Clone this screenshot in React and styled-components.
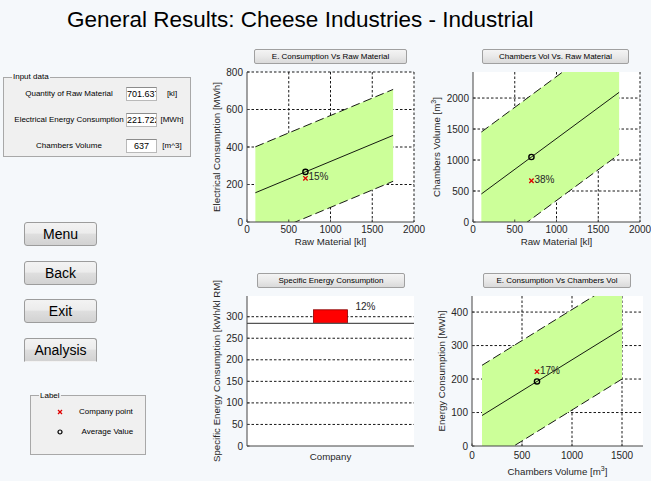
import React from "react";
import styled, { createGlobalStyle } from "styled-components";

const GlobalStyle = createGlobalStyle`
  html, body {
    margin: 0;
    padding: 0;
    background: #f5f8fb;
  }
  body {
    font-family: "Liberation Sans", Arial, sans-serif;
  }
`;

const Figure = styled.div`
  width: 651px;
  height: 481px;
  overflow: hidden;
  background: #f5f8fb;
  display: flex;
  flex-direction: column;
`;

const Title = styled.h1`
  margin: 0;
  height: 40px;
  box-sizing: border-box;
  padding: 7px 0 0 67px;
  font: normal 22.5px/26px "Liberation Sans", Arial, sans-serif;
  color: #000;
`;

const Main = styled.div`
  display: grid;
  grid-template-columns: 200px 226px 225px;
  grid-template-rows: 224px 217px;
`;

const Side = styled.div`
  grid-row: 1 / 3;
  display: flex;
  flex-direction: column;
  align-items: flex-start;
  padding-top: 32px;
`;

const Panel = styled.fieldset`
  margin: ${(p) => p.$top || 0}px 0 0 ${(p) => p.$left}px;
  width: ${(p) => p.$width}px;
  box-sizing: border-box;
  min-width: 0;
  border: 1px solid #a8a8a8;
  background: #f0f0f0;
  padding: ${(p) => p.$pad};
`;

const PanelTitle = styled.legend`
  font-size: 8px;
  line-height: 10px;
  padding: 0 1px;
  margin-left: -2px;
  color: #000;
`;

const InputGrid = styled.div`
  display: grid;
  grid-template-columns: 112px 31px 30px;
  grid-auto-rows: 14px;
  row-gap: 12px;
`;

const FieldName = styled.span`
  font-size: 8px;
  line-height: 14px;
  text-align: center;
  padding-right: 2px;
  white-space: nowrap;
  color: #000;
`;

const EditBox = styled.div`
  box-sizing: border-box;
  background: #fff;
  border: 1px solid #b9b9b9;
  border-top-color: #8c8c8c;
  font-size: 9px;
  line-height: 12px;
  text-align: center;
  white-space: nowrap;
  overflow: hidden;
  padding: 0;
  color: #000;
`;

const Unit = styled.span`
  font-size: 8px;
  line-height: 14px;
  text-align: center;
  color: #000;
`;

const SideButtons = styled.div`
  display: flex;
  flex-direction: column;
  gap: 14.5px;
  margin: 65px 0 0 24px;
`;

const PushButton = styled.button`
  width: 73px;
  height: 24px;
  box-sizing: border-box;
  padding: 0;
  border: 1px solid #9c9c9c;
  border-radius: 3px;
  ${(p) =>
    p.$cut &&
    `border-bottom-color: transparent;
     border-bottom-left-radius: 0;
     border-bottom-right-radius: 0;`}
  background: linear-gradient(#f3f3f3, #ececec 45%, #dedede 52%, #d2d2d2);
  font: 14px "Liberation Sans", Arial, sans-serif;
  color: #000;
`;

const KeyGrid = styled.div`
  display: grid;
  grid-template-columns: 38px auto;
  grid-auto-rows: 10px;
  row-gap: 10.5px;
  align-items: center;
`;

const KeyMark = styled.svg`
  justify-self: center;
  display: block;
`;

const KeyText = styled.span`
  font-size: 8px;
  line-height: 10px;
  padding-left: ${(p) => p.$shift || 0}px;
  color: #000;
`;

const ChartCell = styled.div`
  display: flex;
  flex-direction: column;
  align-items: flex-start;
  padding-top: 9px;
`;

const ChartTitle = styled.button`
  height: 15px;
  width: ${(p) => p.$w}px;
  margin-left: ${(p) => p.$x}px;
  box-sizing: border-box;
  padding: 0;
  border: 1px solid #a0a0a0;
  border-radius: 2px;
  background: linear-gradient(#f4f4f4, #e9e9e9 50%, #dadada);
  font: 8px/13px "Liberation Sans", Arial, sans-serif;
  color: #000;
`;

const ChartSvg = styled.svg`
  display: block;
  overflow: visible;
`;

const Tick = styled.text`
  font-family: "Liberation Sans", Arial, sans-serif;
  font-size: 10px;
  fill: #262626;
  dominant-baseline: central;
`;

const AxisLabel = styled.text`
  font-family: "Liberation Sans", Arial, sans-serif;
  font-size: 9.7px;
  fill: #262626;
  dominant-baseline: central;
  text-anchor: middle;
`;

const Y0 = 8;
const H = 150;

function Cross({ x, y, s = 2.2 }) {
  return (
    <g stroke="#e00000" strokeWidth="1.3">
      <line x1={x - s} y1={y - s} x2={x + s} y2={y + s} />
      <line x1={x - s} y1={y + s} x2={x + s} y2={y - s} />
    </g>
  );
}

function Ring({ x, y }) {
  return <circle cx={x} cy={y} r="2.6" fill="none" stroke="#000" strokeWidth="1.4" />;
}

function Axes({ x0, w, yTicks, py, xTicks, px }) {
  return (
    <g>
      <line x1={x0} y1={Y0} x2={x0} y2={Y0 + H} stroke="#444" />
      <line x1={x0} y1={Y0 + H} x2={x0 + w} y2={Y0 + H} stroke="#444" />
      {yTicks.map((t) => (
        <line key={"yt" + t} x1={x0} x2={x0 + 2.5} y1={py(t)} y2={py(t)} stroke="#444" />
      ))}
      {xTicks &&
        xTicks.map((t) => (
          <line key={"xt" + t} x1={px(t)} x2={px(t)} y1={Y0 + H} y2={Y0 + H - 2.5} stroke="#444" />
        ))}
      {yTicks.map((t) => (
        <Tick key={"yl" + t} x={x0 - 4} y={py(t)} textAnchor="end">
          {t}
        </Tick>
      ))}
    </g>
  );
}

// dashed grid, drawn under the band
function Grid({ children }) {
  return (
    <g stroke="#000" strokeWidth="1" strokeDasharray="2.5 2" opacity="0.9">
      {children}
    </g>
  );
}

function BandChart({ id, width, height, x0, w, xMax, yMax, xTicks, yTicks, band, at, company, pct, xLabel, yLabel, yLabelX, xLabelY = 177.7, tickY = 165.5 }) {
  const px = (v) => x0 + (v / xMax) * w;
  const py = (v) => Y0 + H - (v / yMax) * H;
  const mid = (x) => band.m * x + band.b;
  const up = (x) => mid(x) + band.d;
  const lo = (x) => mid(x) - band.d;
  const { x1, x2 } = band;
  const poly = [
    [px(x1), py(up(x1))],
    [px(x2), py(up(x2))],
    [px(x2), py(lo(x2))],
    [px(x1), py(lo(x1))],
  ]
    .map((p) => p.join(","))
    .join(" ");
  const cx = px(at);
  const cy = py(company);

  return (
    <ChartSvg width={width} height={height}>
      <defs>
        <clipPath id={id}>
          <rect x={x0} y={Y0} width={w} height={H} />
        </clipPath>
      </defs>
      <rect x={x0} y={Y0} width={w} height={H} fill="#fff" />
      <Grid>
        {xTicks.filter((t) => t > 0).map((t) => (
          <line key={"gx" + t} x1={px(t)} x2={px(t)} y1={Y0} y2={Y0 + H} />
        ))}
        {yTicks.filter((t) => t > 0).map((t) => (
          <line key={"gy" + t} x1={x0} x2={x0 + w} y1={py(t)} y2={py(t)} />
        ))}
      </Grid>
      <g clipPath={`url(#${id})`}>
        <polygon points={poly} fill="#ccff99" />
        <g stroke="#000" strokeWidth="0.9" fill="none">
          <line x1={px(x1)} y1={py(up(x1))} x2={px(x2)} y2={py(up(x2))} strokeDasharray="9 4" />
          <line x1={px(x1)} y1={py(lo(x1))} x2={px(x2)} y2={py(lo(x2))} strokeDasharray="9 4" />
          <line x1={px(x1)} y1={py(mid(x1))} x2={px(x2)} y2={py(mid(x2))} />
        </g>
      </g>
      <Axes x0={x0} w={w} yTicks={yTicks} py={py} xTicks={xTicks} px={px} />
      {xTicks.map((t) => (
        <Tick key={"xl" + t} x={px(t)} y={tickY} textAnchor="middle">
          {t}
        </Tick>
      ))}
      <Ring x={cx} y={py(mid(at))} />
      <Cross x={cx} y={cy} />
      <Tick x={cx + 3} y={cy - 1.5}>
        {pct}
      </Tick>
      <AxisLabel x={x0 + w / 2} y={xLabelY}>
        {xLabel}
      </AxisLabel>
      <AxisLabel x={yLabelX} y={Y0 + H / 2} transform={`rotate(-90 ${yLabelX} ${Y0 + H / 2})`}>
        {yLabel}
      </AxisLabel>
    </ChartSvg>
  );
}

function BarChart({ width, height }) {
  const x0 = 47;
  const w = 167;
  const yMax = 348;
  const py = (v) => Y0 + H - (v / yMax) * H;
  const yTicks = [0, 50, 100, 150, 200, 250, 300];
  const average = 284.6;
  const value = 316;
  const barW = 34;
  const bx = x0 + w / 2 - barW / 2;

  return (
    <ChartSvg width={width} height={height}>
      <rect x={x0} y={Y0} width={w} height={H} fill="#fff" />
      <Grid>
        {yTicks.filter((t) => t > 0).map((t) => (
          <line key={t} x1={x0} x2={x0 + w} y1={py(t)} y2={py(t)} />
        ))}
      </Grid>
      <rect x={bx} y={py(value)} width={barW} height={py(average) - py(value)} fill="#ff0000" stroke="#8a0000" strokeWidth="0.8" />
      <line x1={x0} x2={x0 + w} y1={py(average)} y2={py(average)} stroke="#555" strokeWidth="1.4" />
      <Tick x={bx + barW + 8} y={18.7}>
        12%
      </Tick>
      <Axes x0={x0} w={w} yTicks={yTicks} py={py} />
      <AxisLabel x={x0 + w / 2} y={168}>
        Company
      </AxisLabel>
      <AxisLabel x={16} y={Y0 + H / 2} fontSize="9.5" transform={`rotate(-90 16 ${Y0 + H / 2})`}>
        Specific Energy Consumption [kWh/kl RM]
      </AxisLabel>
    </ChartSvg>
  );
}

const cubed = (text) => (
  <>
    {text} [m
    <tspan dy="-3.5" fontSize="7">
      3
    </tspan>
    <tspan dy="3.5">]</tspan>
  </>
);

const inputs = [
  { name: "Quantity of Raw Material", value: "701.637", unit: "[kl]" },
  { name: "Electrical Energy Consumption", value: "221.722", unit: "[MWh]" },
  { name: "Chambers Volume", value: "637", unit: "[m^3]" },
];

export default function App() {
  return (
    <>
      <GlobalStyle />
      <Figure>
        <Title>General Results: Cheese Industries - Industrial</Title>
        <Main>
          <Side>
            <Panel $left={3} $width={188} $pad="5px 3px 3px 10px">
              <PanelTitle>Input data</PanelTitle>
              <InputGrid>
                {inputs.map((row) => (
                  <React.Fragment key={row.name}>
                    <FieldName>{row.name}</FieldName>
                    <EditBox>{row.value}</EditBox>
                    <Unit>{row.unit}</Unit>
                  </React.Fragment>
                ))}
              </InputGrid>
            </Panel>

            <SideButtons>
              <PushButton>Menu</PushButton>
              <PushButton>Back</PushButton>
              <PushButton>Exit</PushButton>
              <PushButton $cut>Analysis</PushButton>
            </SideButtons>

            <Panel $top={29} $left={30} $width={116} $pad="6px 4px 17px 10px">
              <PanelTitle>Label</PanelTitle>
              <KeyGrid>
                <KeyMark width="8" height="8" viewBox="0 0 8 8">
                  <g stroke="#e00000" strokeWidth="1.3">
                    <line x1="2" y1="2" x2="6" y2="6" />
                    <line x1="2" y1="6" x2="6" y2="2" />
                  </g>
                </KeyMark>
                <KeyText>Company point</KeyText>
                <KeyMark width="8" height="8" viewBox="0 0 8 8">
                  <circle cx="4" cy="4" r="2" fill="none" stroke="#000" strokeWidth="1.2" />
                </KeyMark>
                <KeyText $shift={2.5}>Average Value</KeyText>
              </KeyGrid>
            </Panel>
          </Side>

          <ChartCell>
            <ChartTitle $x={54} $w={153}>E. Consumption Vs Raw Material</ChartTitle>
            <BandChart
              id="clip-ec-rm"
              width={226}
              height={200}
              x0={47}
              w={167}
              xMax={2000}
              yMax={800}
              xTicks={[0, 500, 1000, 1500, 2000]}
              yTicks={[0, 200, 400, 600, 800]}
              band={{ m: 0.1855, b: 137.45, d: 245, x1: 100, x2: 1750 }}
              at={700}
              company={233}
              pct="15%"
              xLabel="Raw Material [kl]"
              yLabel="Electrical Consumption [MWh]"
              yLabelX={16}
            />
          </ChartCell>

          <ChartCell>
            <ChartTitle $x={56} $w={147}>Chambers Vol Vs. Raw Material</ChartTitle>
            <BandChart
              id="clip-cv-rm"
              width={225}
              height={200}
              x0={47}
              w={167}
              xMax={2000}
              yMax={2420}
              xTicks={[0, 500, 1000, 1500, 2000]}
              yTicks={[0, 500, 1000, 1500, 2000]}
              band={{ m: 0.994, b: 352.6, d: 1000, x1: 100, x2: 1750 }}
              at={700}
              company={666}
              pct="38%"
              xLabel="Raw Material [kl]"
              yLabel={cubed("Chambers Volume")}
              yLabelX={10}
            />
          </ChartCell>

          <ChartCell>
            <ChartTitle $x={57} $w={148}>Specific Energy Consumption</ChartTitle>
            <BarChart width={226} height={193} />
          </ChartCell>

          <ChartCell>
            <ChartTitle $x={57} $w={148}>E. Consumption Vs Chambers Vol</ChartTitle>
            <BandChart
              id="clip-ec-cv"
              width={225}
              height={193}
              x0={46}
              w={171}
              xMax={1710}
              yMax={448}
              xTicks={[0, 500, 1000, 1500]}
              yTicks={[0, 100, 200, 300, 400]}
              band={{ m: 0.185, b: 72.5, d: 150, x1: 100, x2: 1500 }}
              at={650}
              company={222}
              pct="17%"
              xLabel={cubed("Chambers Volume")}
              yLabel="Energy Consumption [MWh]"
              yLabelX={15}
              xLabelY={183}
              tickY={167}
            />
          </ChartCell>
        </Main>
      </Figure>
    </>
  );
}
